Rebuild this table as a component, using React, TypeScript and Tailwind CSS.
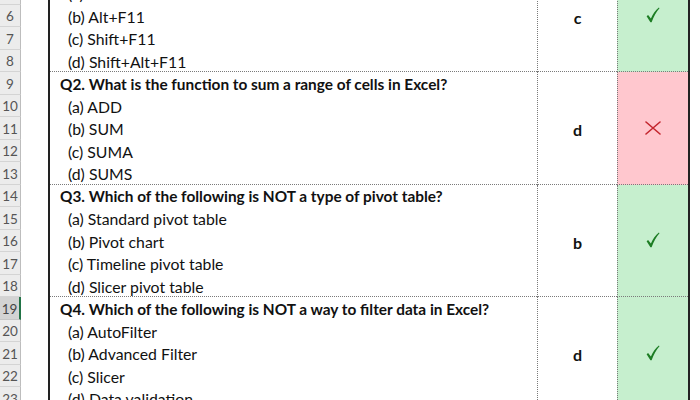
import React from "react";

type Block = {
  start: number;
  question: string;
  options: string[];
  answer: string;
  correct: boolean;
};

const blocks: Block[] = [
  {
    start: 4,
    question: "Q1. What is the keyboard shortcut to insert a chart sheet in Excel?",
    options: ["(a) F11", "(b) Alt+F11", "(c) Shift+F11", "(d) Shift+Alt+F11"],
    answer: "c",
    correct: true,
  },
  {
    start: 9,
    question: "Q2. What is the function to sum a range of cells in Excel?",
    options: ["(a) ADD", "(b) SUM", "(c) SUMA", "(d) SUMS"],
    answer: "d",
    correct: false,
  },
  {
    start: 14,
    question: "Q3. Which of the following is NOT a type of pivot table?",
    options: [
      "(a) Standard pivot table",
      "(b) Pivot chart",
      "(c) Timeline pivot table",
      "(d) Slicer pivot table",
    ],
    answer: "b",
    correct: true,
  },
  {
    start: 19,
    question: "Q4. Which of the following is NOT a way to filter data in Excel?",
    options: ["(a) AutoFilter", "(b) Advanced Filter", "(c) Slicer", "(d) Data validation"],
    answer: "d",
    correct: true,
  },
];

const SELECTED_ROW = 19;

const CheckMark = () => (
  <svg width="14" height="16" viewBox="0 0 14 16">
    <path
      d="M0.6 9.2 L2.1 8.1 L4.9 11.6 C6.9 7 9.4 3.2 12.9 0.6 L13.5 1.3 C10.4 4.5 7.9 9.3 5.6 15.2 L4.4 15.2 Z"
      fill="#1d7d24"
    />
  </svg>
);

const CrossMark = () => (
  <svg width="16" height="14" viewBox="0 0 16 14">
    <path d="M1 1 L15 13 M15 1 L1 13" stroke="#c4262e" strokeWidth="1.6" strokeLinecap="round" />
  </svg>
);

function RowHeader({ n }: { n: number }) {
  const selected = n === SELECTED_ROW;
  return (
    <div
      className={
        selected
          ? "h-[22.5px] flex items-center justify-center border-b border-[#c6c6c6] border-r-2 border-r-[#217346] bg-[#d3d3d3] text-[#444] text-[13.5px] pt-[2px]"
          : "h-[22.5px] flex items-center justify-center border-b border-[#d4d4d4] border-r border-r-[#bdbdbd] bg-[#ececec] text-[#555] text-[13.5px] pt-[2px]"
      }
    >
      {n}
    </div>
  );
}

function QuizBlock({ block }: { block: Block }) {
  const rows = [0, 1, 2, 3, 4].map((i) => block.start + i);
  return (
    <div className="flex h-[112.5px]">
      <div className="w-[21px] flex flex-col">
        {rows.map((n) => (
          <RowHeader key={n} n={n} />
        ))}
      </div>
      <div className="w-[27px]" />
      <div className="flex border-l-2 border-r-2 border-[#222]">
        <div className="w-[487px] flex flex-col border-b border-dotted border-[#7a7a7a]">
          <div className="h-[22.5px] flex items-center pl-[10px] pt-[2px] font-bold text-[15.4px]">
            {block.question}
          </div>
          {block.options.map((o) => (
            <div key={o} className="h-[22.5px] flex items-center pl-[18px] pt-[2px] text-[15.8px]">
              {o}
            </div>
          ))}
        </div>
        <div className="w-[80px] flex items-center justify-center pt-[5px] font-bold text-[16px] border-l border-b border-dotted border-[#7a7a7a]">
          {block.answer}
        </div>
        <div
          className={
            block.correct
              ? "w-[71px] flex items-center justify-center bg-[#c6efce] border-l border-b border-dotted border-[#7a7a7a]"
              : "w-[71px] flex items-center justify-center bg-[#ffc7ce] border-l border-b border-dotted border-[#7a7a7a]"
          }
        >
          {block.correct ? <CheckMark /> : <CrossMark />}
        </div>
      </div>
    </div>
  );
}

export default function App() {
  return (
    <div className="w-[700px] h-[400px] overflow-hidden bg-white text-[#111] font-['Lato',sans-serif]">
      <div className="-mt-[40.5px] flex flex-col">
        {blocks.map((b) => (
          <QuizBlock key={b.start} block={b} />
        ))}
      </div>
    </div>
  );
}
